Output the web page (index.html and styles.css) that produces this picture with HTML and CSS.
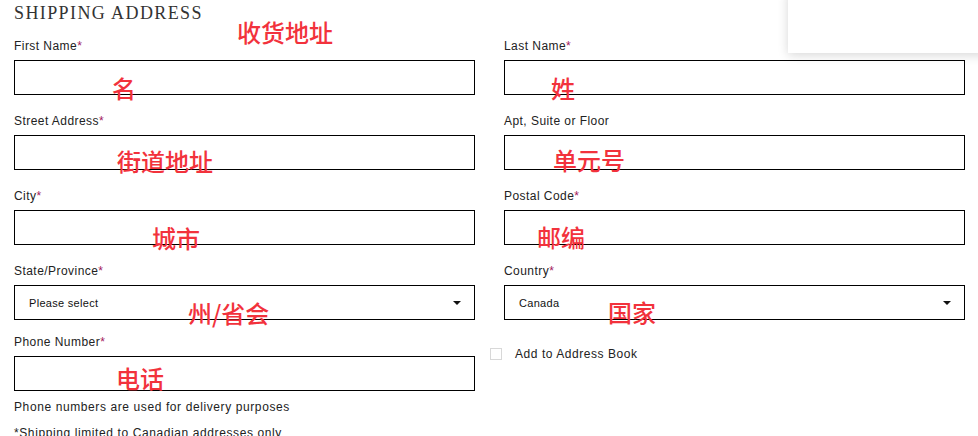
FILE: index.html
```html
<!DOCTYPE html>
<html lang="en">
<head>
<meta charset="utf-8">
<title>Shipping Address</title>
<link rel="stylesheet" href="styles.css">
</head>
<body>
<div class="page">
  <aside class="floating-card"></aside>
  <h2 class="title">Shipping Address</h2>
  <form class="form">
    <div class="field">
      <label class="label">First Name<span class="req">*</span></label>
      <div class="input"></div>
    </div>
    <div class="field">
      <label class="label">Last Name<span class="req">*</span></label>
      <div class="input"></div>
    </div>
    <div class="field">
      <label class="label">Street Address<span class="req">*</span></label>
      <div class="input"></div>
    </div>
    <div class="field">
      <label class="label">Apt, Suite or Floor</label>
      <div class="input"></div>
    </div>
    <div class="field">
      <label class="label">City<span class="req">*</span></label>
      <div class="input"></div>
    </div>
    <div class="field">
      <label class="label">Postal Code<span class="req">*</span></label>
      <div class="input"></div>
    </div>
    <div class="field">
      <label class="label">State/Province<span class="req">*</span></label>
      <div class="input select"><span class="select-text">Please select</span><span class="caret"></span></div>
    </div>
    <div class="field">
      <label class="label">Country<span class="req">*</span></label>
      <div class="input select"><span class="select-text">Canada</span><span class="caret"></span></div>
    </div>
    <div class="field field-phone">
      <label class="label">Phone Number<span class="req">*</span></label>
      <div class="input"></div>
      <p class="help">Phone numbers are used for delivery purposes</p>
      <p class="help note">*Shipping limited to Canadian addresses only</p>
    </div>
    <div class="checkbox-row">
      <span class="checkbox"></span>
      <span class="checkbox-label">Add to Address Book</span>
    </div>
  </form>

  <span class="anno a1">收货地址</span>
  <span class="anno a2">名</span>
  <span class="anno a3">姓</span>
  <span class="anno a4">街道地址</span>
  <span class="anno a5">单元号</span>
  <span class="anno a6">城市</span>
  <span class="anno a7">邮编</span>
  <span class="anno a8">州/省会</span>
  <span class="anno a9">国家</span>
  <span class="anno a10">电话</span>
</div>
</body>
</html>
```

FILE: styles.css
```css
html, body {
  margin: 0;
  padding: 0;
  background: #fff;
}

.page {
  position: relative;
  width: 978px;
  height: 436px;
  overflow: hidden;
  padding: 0 13px 0 14px;
  box-sizing: border-box;
  font-family: "Liberation Sans", Arial, sans-serif;
  color: #222;
}

.floating-card {
  position: absolute;
  top: -10px;
  left: 788px;
  width: 200px;
  height: 63px;
  background: #fff;
  box-shadow: 0 2px 10px rgba(0, 0, 0, 0.16);
}

.title {
  margin: 0;
  padding-top: 2px;
  font-family: "Liberation Serif", "Times New Roman", serif;
  font-weight: normal;
  font-size: 18px;
  line-height: 22px;
  letter-spacing: 1.4px;
  text-transform: uppercase;
  color: #333;
}

.form {
  display: grid;
  grid-template-columns: 461px 461px;
  column-gap: 29px;
  row-gap: 18px;
  margin-top: 14px;
}

.field {
  display: flex;
  flex-direction: column;
}

.label {
  font-size: 12px;
  line-height: 16px;
  letter-spacing: 0.45px;
  margin-bottom: 6px;
  color: #222;
}

.req {
  color: #a3195b;
}

.input {
  height: 35px;
  border: 1px solid #000;
  box-sizing: border-box;
}

.select {
  display: flex;
  align-items: center;
  justify-content: space-between;
  padding: 0 13px 0 14px;
}

.select-text {
  font-size: 11px;
  letter-spacing: 0.3px;
  color: #111;
}

.caret {
  width: 0;
  height: 0;
  border-left: 4px solid transparent;
  border-right: 4px solid transparent;
  border-top: 4px solid #111;
}

.field-phone {
  margin-top: -4px;
}

.help {
  margin: 8px 0 0;
  font-size: 12px;
  line-height: 16px;
  letter-spacing: 0.6px;
  color: #222;
}

.help.note {
  margin-top: 10px;
}

.checkbox-row {
  display: flex;
  align-items: center;
  gap: 13px;
  margin-left: -14px;
  margin-top: 8px;
  align-self: start;
}

.checkbox {
  width: 12px;
  height: 12px;
  border: 1px solid #d8d8d8;
  box-sizing: border-box;
}

.checkbox-label {
  font-size: 12px;
  line-height: 16px;
  letter-spacing: 0.55px;
  color: #222;
}

.anno {
  position: absolute;
  font-family: "Noto Sans CJK SC", sans-serif;
  font-weight: 500;
  font-size: 24px;
  line-height: 24px;
  color: #f2323c;
  white-space: nowrap;
}

.a1 { left: 237px; top: 20px; }
.a2 { left: 112px; top: 76px; }
.a3 { left: 551px; top: 76px; }
.a4 { left: 117px; top: 149px; }
.a5 { left: 553px; top: 148px; }
.a6 { left: 152px; top: 226px; }
.a7 { left: 537px; top: 225px; }
.a8 { left: 188px; top: 301px; }
.a9 { left: 608px; top: 300px; }
.a10 { left: 116px; top: 366px; }
```
